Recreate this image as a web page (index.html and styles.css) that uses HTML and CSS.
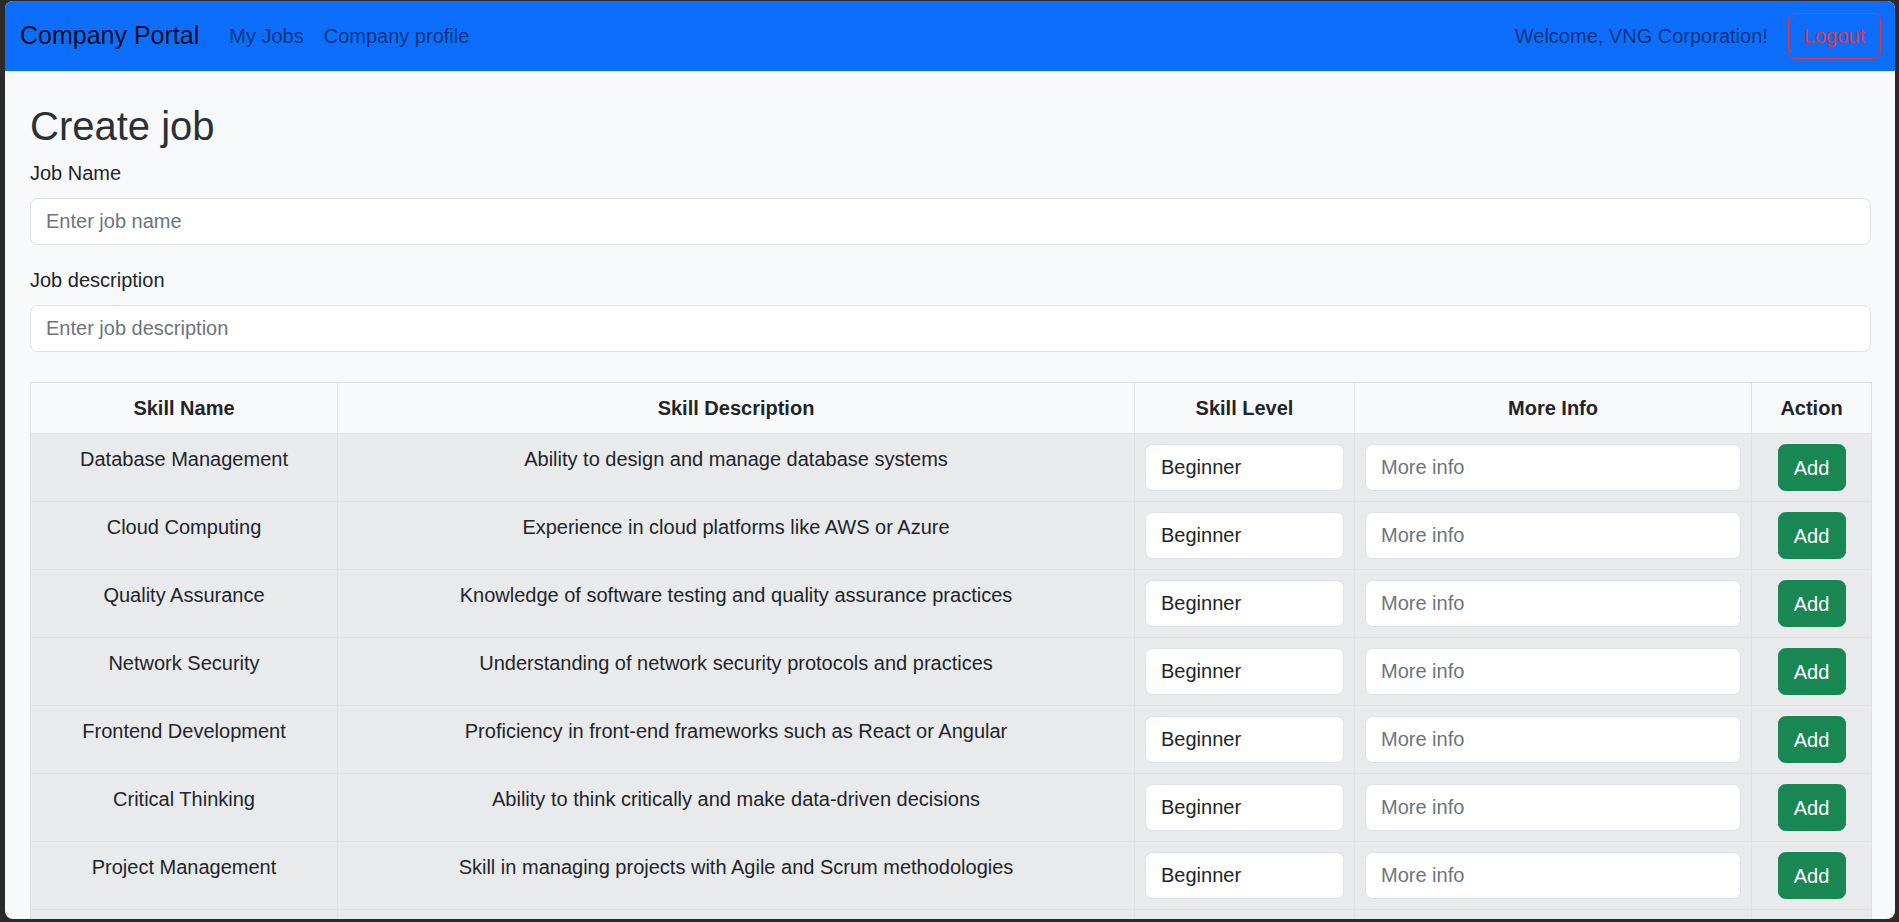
FILE: index.html
```html
<!DOCTYPE html>
<html lang="en">
<head>
<meta charset="utf-8">
<title>Company Portal - Create job</title>
<link rel="stylesheet" href="styles.css">
</head>
<body>
<div class="window">
  <nav class="navbar">
    <div class="nav-left">
      <span class="brand">Company Portal</span>
      <a class="nav-link">My Jobs</a>
      <a class="nav-link">Company profile</a>
    </div>
    <div class="nav-right">
      <span class="welcome">Welcome, VNG Corporation!</span>
      <button class="btn-logout">Logout</button>
    </div>
  </nav>
  <main class="container">
    <h2 class="title">Create job</h2>
    <div class="field">
      <label class="label">Job Name</label>
      <input class="form-control" type="text" placeholder="Enter job name">
    </div>
    <div class="field field-last">
      <label class="label">Job description</label>
      <input class="form-control" type="text" placeholder="Enter job description">
    </div>
    <table class="skills">
      <colgroup>
        <col class="c-name"><col class="c-desc"><col class="c-level"><col class="c-info"><col class="c-action">
      </colgroup>
      <thead>
        <tr><th>Skill Name</th><th>Skill Description</th><th>Skill Level</th><th>More Info</th><th>Action</th></tr>
      </thead>
      <tbody>
        <tr><td>Database Management</td><td>Ability to design and manage database systems</td><td><input class="form-control" value="Beginner"></td><td><input class="form-control" placeholder="More info"></td><td><button class="btn-add">Add</button></td></tr>
        <tr><td>Cloud Computing</td><td>Experience in cloud platforms like AWS or Azure</td><td><input class="form-control" value="Beginner"></td><td><input class="form-control" placeholder="More info"></td><td><button class="btn-add">Add</button></td></tr>
        <tr><td>Quality Assurance</td><td>Knowledge of software testing and quality assurance practices</td><td><input class="form-control" value="Beginner"></td><td><input class="form-control" placeholder="More info"></td><td><button class="btn-add">Add</button></td></tr>
        <tr><td>Network Security</td><td>Understanding of network security protocols and practices</td><td><input class="form-control" value="Beginner"></td><td><input class="form-control" placeholder="More info"></td><td><button class="btn-add">Add</button></td></tr>
        <tr><td>Frontend Development</td><td>Proficiency in front-end frameworks such as React or Angular</td><td><input class="form-control" value="Beginner"></td><td><input class="form-control" placeholder="More info"></td><td><button class="btn-add">Add</button></td></tr>
        <tr><td>Critical Thinking</td><td>Ability to think critically and make data-driven decisions</td><td><input class="form-control" value="Beginner"></td><td><input class="form-control" placeholder="More info"></td><td><button class="btn-add">Add</button></td></tr>
        <tr><td>Project Management</td><td>Skill in managing projects with Agile and Scrum methodologies</td><td><input class="form-control" value="Beginner"></td><td><input class="form-control" placeholder="More info"></td><td><button class="btn-add">Add</button></td></tr>
        <tr><td></td><td></td><td><input class="form-control" value=""></td><td><input class="form-control" value=""></td><td><button class="btn-add" aria-label="Add"></button></td></tr>
      </tbody>
    </table>
  </main>
</div>
</body>
</html>
```

FILE: styles.css
```css
* { box-sizing: border-box; }

html, body {
  margin: 0;
  padding: 0;
  height: 922px;
  overflow: hidden;
  background: #2b2b2b;
}

body {
  font-family: "Liberation Sans", Arial, sans-serif;
  font-size: 20px;
  line-height: 1.5;
  color: #212529;
}

.window {
  margin: 1px 4px 0 5px;
  height: 918px;
  border-radius: 8px;
  overflow: hidden;
  background: #f8f9fa;
}

.navbar {
  height: 70px;
  background: #0d6efd;
  display: flex;
  align-items: center;
  justify-content: space-between;
  padding: 0 14px 0 15px;
}

.nav-left, .nav-right {
  display: flex;
  align-items: center;
}

.brand {
  font-size: 25px;
  line-height: 37.5px;
  color: rgba(0, 0, 0, 0.9);
  margin-right: 20px;
}

.nav-link {
  padding: 0 10px;
  font-size: 20px;
  color: rgba(0, 0, 0, 0.55);
  text-decoration: none;
}

.welcome {
  color: rgba(0, 0, 0, 0.55);
  margin-right: 20px;
}

.btn-logout {
  font-family: inherit;
  font-size: 20px;
  line-height: 30px;
  color: #dc3545;
  background: transparent;
  border: 1px solid #dc3545;
  border-radius: 7px;
  padding: 7px 15px;
  height: 46px;
}

.container {
  padding: 31px 24px 0 25px;
}

.title {
  margin: 0 0 8px;
  font-size: 40px;
  font-weight: 500;
  line-height: 1.2;
  color: #2b3035;
}

.field { margin-bottom: 20px; }
.field-last { margin-bottom: 30px; }

.label {
  display: block;
  margin-bottom: 10px;
}

.form-control {
  display: block;
  width: 100%;
  height: 47px;
  padding: 7.5px 15px;
  font-family: inherit;
  font-size: 20px;
  line-height: 30px;
  color: #212529;
  background: #fff;
  border: 1px solid #dee2e6;
  border-radius: 7.5px;
  outline: none;
}

.form-control::placeholder { color: #6c757d; }

.skills {
  width: 100%;
  table-layout: fixed;
  border-collapse: collapse;
}

.c-name { width: 307px; }
.c-desc { width: 797px; }
.c-level { width: 220px; }
.c-info { width: 397px; }
.c-action { width: 120px; }

.skills th, .skills td {
  border: 1px solid #dee2e6;
  padding: 10px;
  text-align: center;
  vertical-align: top;
}

.skills th {
  font-weight: 700;
  background: #f8f9fa;
}

.skills td { background: #e9eaec; }

.btn-add {
  font-family: inherit;
  font-size: 20px;
  line-height: 30px;
  height: 47px;
  min-width: 68px;
  padding: 7.5px 15px;
  color: #fff;
  background: #198754;
  border: 1px solid #198754;
  border-radius: 7.5px;
}
```
